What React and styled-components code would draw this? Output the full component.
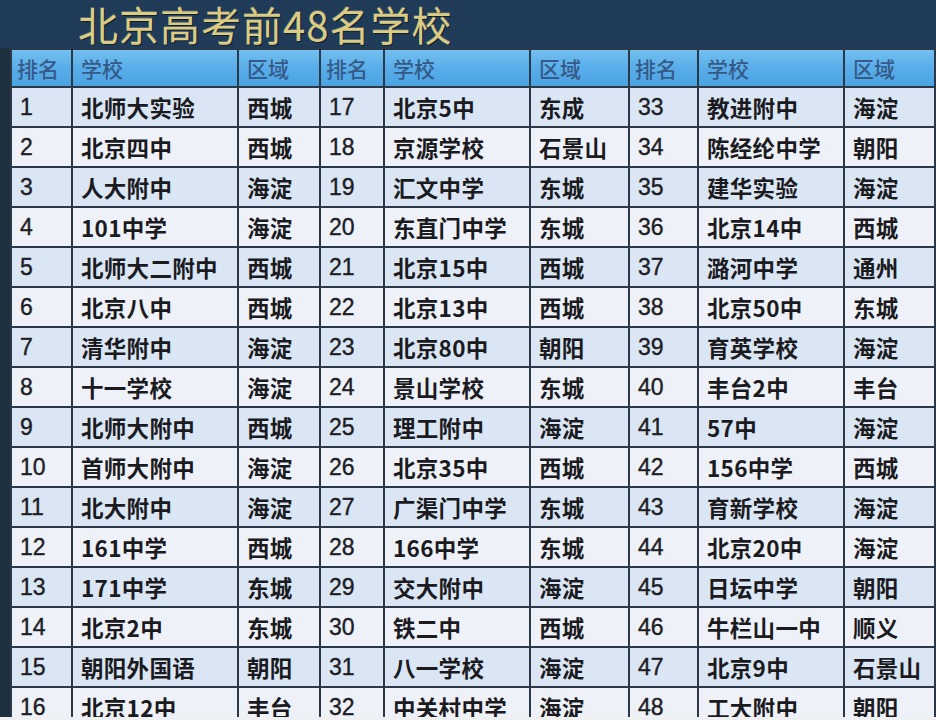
import React from "react";
import styled, { createGlobalStyle } from "styled-components";

const Global = createGlobalStyle`
  html, body { margin: 0; padding: 0; background: #eef0f2; }
  body { font-family: "Liberation Sans", "Noto Sans CJK SC", sans-serif; }
`;

const Page = styled.div`
  width: 936px;
  height: 717px;
  overflow: hidden;
  background: linear-gradient(180deg, #1f3b58 0%, #22405c 60%, #1b2c3d 100%);
  display: flex;
  flex-direction: column;
`;

const TitleBar = styled.div`
  height: 48px;
  padding-left: 78px;
  display: flex;
  align-items: center;
  flex-shrink: 0;
`;

const Title = styled.h1`
  margin: 0;
  font-family: "Noto Sans CJK SC", sans-serif;
  font-weight: 400;
  font-size: 40px;
  line-height: 1.1;
  letter-spacing: 1px;
  color: #dccb82;
  text-shadow: 1px 1px 0 rgba(0, 0, 0, 0.5), 0 -1px 0 rgba(255, 245, 200, 0.25);
`;

const Body = styled.div`
  display: flex;
  flex: 1;
  padding-left: 10px;
  background: #1e2f40;
`;

const Grid = styled.div`
  display: grid;
  grid-template-columns: 59px 164px 80px 62px 144px 97px 67px 144px 89px;
  grid-auto-rows: 38px;
  grid-template-rows: 36px;
  gap: 2px;
  padding: 2px;
  background: #2a3848;
  align-content: start;
`;

const HeadCell = styled.div`
  background: linear-gradient(180deg, #74c0f0 0%, #58ade9 50%, #4ba3e2 100%);
  color: #365a88;
  font-family: "Noto Sans CJK SC", sans-serif;
  font-size: 21px;
  font-weight: 500;
  display: flex;
  align-items: center;
  padding-left: ${p => (p.$narrow ? 5 : 8)}px;
  white-space: nowrap;
`;

const Cell = styled.div`
  background: ${p => (p.$odd ? "#dae6f4" : "#eef2f8")};
  color: #1b1b1f;
  display: flex;
  align-items: center;
  padding-left: 8px;
  white-space: nowrap;
  overflow: hidden;
`;

const Num = styled(Cell)`
  font-family: "Liberation Sans", sans-serif;
  font-size: 23px;
  font-weight: 400;
  color: #1e1e26;
  -webkit-text-stroke: 0.4px #1e1e26;
`;

const Name = styled(Cell)`
  font-family: "Noto Sans CJK SC", sans-serif;
  font-size: 22.5px;
  font-weight: 700;
  letter-spacing: 0.3px;
`;

const data = [
  ["北师大实验", "西城", "北京5中", "东成", "教进附中", "海淀"],
  ["北京四中", "西城", "京源学校", "石景山", "陈经纶中学", "朝阳"],
  ["人大附中", "海淀", "汇文中学", "东城", "建华实验", "海淀"],
  ["101中学", "海淀", "东直门中学", "东城", "北京14中", "西城"],
  ["北师大二附中", "西城", "北京15中", "西城", "潞河中学", "通州"],
  ["北京八中", "西城", "北京13中", "西城", "北京50中", "东城"],
  ["清华附中", "海淀", "北京80中", "朝阳", "育英学校", "海淀"],
  ["十一学校", "海淀", "景山学校", "东城", "丰台2中", "丰台"],
  ["北师大附中", "西城", "理工附中", "海淀", "57中", "海淀"],
  ["首师大附中", "海淀", "北京35中", "西城", "156中学", "西城"],
  ["北大附中", "海淀", "广渠门中学", "东城", "育新学校", "海淀"],
  ["161中学", "西城", "166中学", "东城", "北京20中", "海淀"],
  ["171中学", "东城", "交大附中", "海淀", "日坛中学", "朝阳"],
  ["北京2中", "东城", "铁二中", "西城", "牛栏山一中", "顺义"],
  ["朝阳外国语", "朝阳", "八一学校", "海淀", "北京9中", "石景山"],
  ["北京12中", "丰台", "中关村中学", "海淀", "工大附中", "朝阳"],
];

const headers = ["排名", "学校", "区域", "排名", "学校", "区域", "排名", "学校", "区域"];

export default function App() {
  return (
    <>
      <Global />
      <Page>
        <TitleBar>
          <Title>北京高考前48名学校</Title>
        </TitleBar>
        <Body>
          <Grid>
            {headers.map((h, i) => (
              <HeadCell key={"h" + i} $narrow={i % 3 === 0}>{h}</HeadCell>
            ))}
            {data.map((r, i) => {
              const odd = i % 2 === 0;
              return (
                <React.Fragment key={i}>
                  {[0, 1, 2].map(g => (
                    <React.Fragment key={g}>
                      <Num $odd={odd}>{i + 1 + g * 16}</Num>
                      <Name $odd={odd}>{r[g * 2]}</Name>
                      <Name $odd={odd}>{r[g * 2 + 1]}</Name>
                    </React.Fragment>
                  ))}
                </React.Fragment>
              );
            })}
          </Grid>
        </Body>
      </Page>
    </>
  );
}
